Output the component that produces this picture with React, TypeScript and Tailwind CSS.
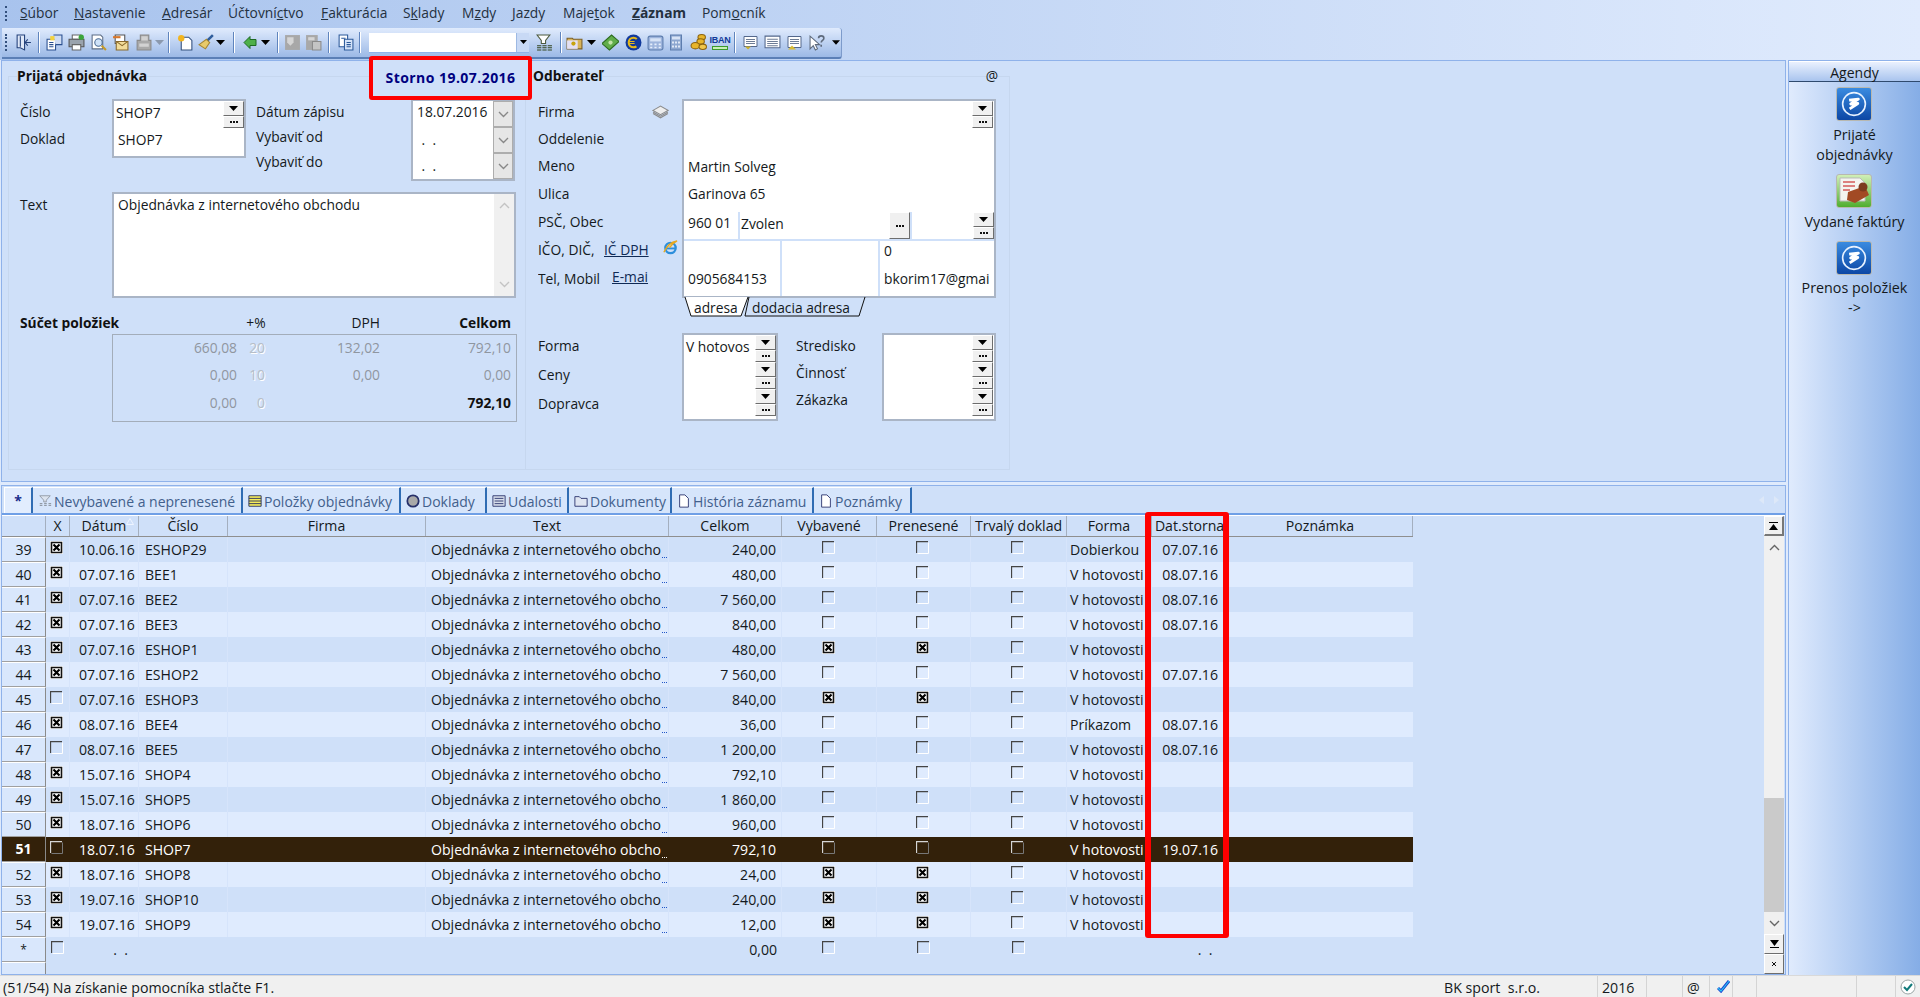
import React from "react";

const COLS = "grid grid-cols-[44px_24px_69px_89px_198px_243px_113px_95px_94px_96px_85px_76px_185px] w-[1411px]";

type R = [string, boolean, string, string, string, boolean, boolean, string, string];
const DATA: R[] = [
  ["39", true, "10.06.16", "ESHOP29", "240,00", false, false, "Dobierkou", "07.07.16"],
  ["40", true, "07.07.16", "BEE1", "480,00", false, false, "V hotovosti", "08.07.16"],
  ["41", true, "07.07.16", "BEE2", "7 560,00", false, false, "V hotovosti", "08.07.16"],
  ["42", true, "07.07.16", "BEE3", "840,00", false, false, "V hotovosti", "08.07.16"],
  ["43", true, "07.07.16", "ESHOP1", "480,00", true, true, "V hotovosti", ""],
  ["44", true, "07.07.16", "ESHOP2", "7 560,00", false, false, "V hotovosti", "07.07.16"],
  ["45", false, "07.07.16", "ESHOP3", "840,00", true, true, "V hotovosti", ""],
  ["46", true, "08.07.16", "BEE4", "36,00", false, false, "Príkazom", "08.07.16"],
  ["47", false, "08.07.16", "BEE5", "1 200,00", false, false, "V hotovosti", "08.07.16"],
  ["48", true, "15.07.16", "SHOP4", "792,10", false, false, "V hotovosti", ""],
  ["49", true, "15.07.16", "SHOP5", "1 860,00", false, false, "V hotovosti", ""],
  ["50", true, "18.07.16", "SHOP6", "960,00", false, false, "V hotovosti", ""],
  ["51", false, "18.07.16", "SHOP7", "792,10", false, false, "V hotovosti", "19.07.16"],
  ["52", true, "18.07.16", "SHOP8", "24,00", true, true, "V hotovosti", ""],
  ["53", true, "19.07.16", "SHOP10", "240,00", true, true, "V hotovosti", ""],
  ["54", true, "19.07.16", "SHOP9", "12,00", true, true, "V hotovosti", ""],
];

function Check({ on, dark }: { on: boolean; dark?: boolean }) {
  if (on)
    return (
      <svg width="13" height="13" viewBox="0 0 13 13" className="-mt-[4px] -ml-[2px]">
        <rect x="0" y="0" width="13" height="13" fill="#fff" />
        <path d="M1.500 11.500V1.500H11.500V11.500Z" fill="#fff" stroke="#111" strokeWidth="1.600" />
        <path d="M3.500 3.500 9.500 9.500M9.500 3.500 3.500 9.500" stroke="#000" strokeWidth="2.200" />
      </svg>
    );
  return (
    <svg width="13" height="13" viewBox="0 0 13 13" className="-mt-[4px] -ml-[2px]">
      <path d="M.5 12V.5H12" fill="none" stroke={dark ? "#d5d5d5" : "#444"} strokeWidth="1.300" />
      <path d="M1.500 12.500H12.500V1.500" fill="none" stroke={dark ? "#777" : "#fff"} />
    </svg>
  );
}

function Tri({ c = "#000" }: { c?: string }) {
  return (
    <svg width="9" height="5" viewBox="0 0 9 5">
      <path d="M0 0H9L4.5 5Z" fill={c} />
    </svg>
  );
}

const BTN = "bg-[#f0f0f0] border border-t-white border-l-white border-r-[#6d6d6d] border-b-[#6d6d6d] flex items-center justify-center";

function Dots() {
  return (
    <svg width="8" height="2" viewBox="0 0 8 2">
      <path d="M0 0h2v2H0zM3 0h2v2H3zM6 0h2v2H6z" fill="#111" />
    </svg>
  );
}

function Drop() {
  return (
    <div className="flex flex-col w-[21px] shrink-0">
      <div className={BTN + " h-[15px]"}>
        <Tri />
      </div>
      <div className={BTN + " h-[12px]"}>
        <Dots />
      </div>
    </div>
  );
}

function Chev({ up, c = "#888" }: { up?: boolean; c?: string }) {
  return (
    <svg width="11" height="7" viewBox="0 0 11 7">
      <path d={up ? "M1 6 5.5 1.5 10 6" : "M1 1 5.5 5.5 10 1"} fill="none" stroke={c} strokeWidth="1.4" />
    </svg>
  );
}

function Sep({ w }: { w: string }) {
  return (
    <div className={"flex justify-center shrink-0 " + w}>
      <div className="w-[1px] h-[21px] bg-[#5f84bd] border-r border-r-white box-content" />
    </div>
  );
}

function Cell({ w, children }: { w: string; children: React.ReactNode }) {
  return <div className={"flex items-center justify-center shrink-0 h-[22px] " + w}>{children}</div>;
}

function I({ children, s = 17 }: { children: React.ReactNode; s?: number }) {
  return (
    <svg width={s} height={s} viewBox="0 0 16 16" fill="none">
      {children}
    </svg>
  );
}

function Toolbar() {
  return (
    <div className="ml-[2px] w-[840px] h-[31px] flex items-center pl-[2px] rounded-r-[3px] border-b-2 border-b-[#5b7fb6] border-r border-r-[#7d9bcb] bg-linear-to-b from-[#e0ebfd] to-[#9cb9e6]">
      <div className="w-[7px] h-[17px] border-l-2 border-dotted border-l-[#33507d] ml-[1px]" />
      <Cell w="w-[23px]">
        <I>
          <path d="M2 1h7v14l-4-2H2z" fill="#dfe8f8" stroke="#23407a" />
          <path d="M5 2v10M12 5 9.5 8l2.5 3M15 8H10" stroke="#23407a" />
        </I>
      </Cell>
      <Sep w="w-[8px]" />
      <Cell w="w-[22px]">
        <I>
          <path d="M1 5h8v10H1z" fill="#fff" stroke="#2a4f8f" />
          <path d="M7 1h8v9H9" fill="#cfdcf3" stroke="#2a4f8f" />
          <path d="M3 8h4M3 10h4M3 12h4" stroke="#2a4f8f" />
          <path d="M4 2h4v4H4z" fill="#f4d23c" />
        </I>
      </Cell>
      <Cell w="w-[22px]">
        <I>
          <path d="M4 1h8v4H4z" fill="#fff" stroke="#666" />
          <path d="M1 5h14v7H1z" fill="#9aa3ad" stroke="#555" />
          <path d="M4 10h8v5H4z" fill="#fff" stroke="#666" />
          <circle cx="12.5" cy="3" r="2.5" fill="#3aa53a" />
        </I>
      </Cell>
      <Cell w="w-[22px]">
        <I>
          <path d="M2 1h8l2 2v11H2z" fill="#fff" stroke="#5d6d85" />
          <circle cx="8" cy="8" r="3.5" fill="#cfe2f8" stroke="#4a6a94" />
          <path d="M11 11l4 4" stroke="#c49a2c" strokeWidth="2" />
        </I>
      </Cell>
      <Cell w="w-[22px]">
        <I>
          <path d="M3 1h9v8H3z" fill="#fff" stroke="#555" />
          <path d="M1 2h7v2H1z" fill="#d8762a" />
          <path d="M4 7h11v8H4z" fill="#f2dc9a" stroke="#8a6a2c" />
          <path d="M4 7l5.5 4L15 7" stroke="#8a6a2c" />
        </I>
      </Cell>
      <Cell w="w-[24px]">
        <I>
          <path d="M2 6h3V1h8v5h2v9H2z" fill="#a9a9a9" stroke="#8a8a8a" />
          <path d="M6 2h6v4H6zM4 9h9v3H4z" fill="#d2d2d2" />
        </I>
      </Cell>
      <Cell w="w-[9px]">
        <Tri c="#8b99ae" />
      </Cell>
      <Sep w="w-[10px]" />
      <Cell w="w-[22px]">
        <I>
          <path d="M4 3h7l3 3v9H4z" fill="#fff" stroke="#33507d" />
          <circle cx="4" cy="4" r="3" fill="#f2b51f" />
        </I>
      </Cell>
      <Cell w="w-[20px]">
        <I>
          <path d="M14 1 8 7" stroke="#2f5d9c" strokeWidth="2.4" />
          <path d="M8 5 11 8 7 14 1 10z" fill="#e8ca6a" stroke="#a58634" />
        </I>
      </Cell>
      <Cell w="w-[9px]">
        <Tri />
      </Cell>
      <Sep w="w-[17px]" />
      <Cell w="w-[16px]">
        <I>
          <path d="M2 8 8 2v3h6v6H8v3z" fill="#4eb04a" stroke="#1c6a22" />
        </I>
      </Cell>
      <Cell w="w-[15px]">
        <Tri />
      </Cell>
      <Sep w="w-[10px]" />
      <Cell w="w-[19px]">
        <I>
          <path d="M1 1h14v14H1z" fill="#a8a8a8" />
          <path d="M3 3h6v5l-3 3-3-3z" fill="#d5d5d5" />
        </I>
      </Cell>
      <Cell w="w-[22px]">
        <I>
          <path d="M1 1h11v14H1z" fill="#a8a8a8" />
          <path d="M7 7h8v8H7z" fill="#c4c4c4" stroke="#8a8a8a" />
          <path d="M3 3h6v3H3z" fill="#d5d5d5" />
        </I>
      </Cell>
      <Sep w="w-[10px]" />
      <Cell w="w-[22px]">
        <I>
          <path d="M2 1h8v11H2z" fill="#fff" stroke="#2c5a9a" />
          <path d="M7 5h8v10H7z" fill="#d5e3f8" stroke="#2c5a9a" />
          <path d="M4 4h4M9 8h4M9 10h4M9 12h4" stroke="#2c5a9a" />
        </I>
      </Cell>
      <Sep w="w-[8px]" />
      <div className="ml-[5px] w-[160px] h-[20px] bg-white flex justify-end shrink-0 border-b border-b-[#8fb2ea]">
        <div className="w-[13px] bg-[#c8d9f5] border-l border-l-[#9db9e3] flex items-center justify-center">
          <svg width="7" height="4" viewBox="0 0 7 4">
            <path d="M0 0H7L3.5 4Z" fill="#000" />
          </svg>
        </div>
      </div>
      <Cell w="w-[30px]">
        <I>
          <path d="M1 1h12L9 6v3H5V6z" fill="#fff" stroke="#4d5a3f" />
          <path d="M1 11h4M6 11h4M11 11h4M1 13h4M6 13h4M11 13h4M1 15h4M6 15h4M11 15h4" stroke="#33451f" />
        </I>
      </Cell>
      <Sep w="w-[4px]" />
      <Cell w="w-[23px]">
        <I>
          <path d="M1 4h5l1 1h8v9H1z" fill="#d8b45a" stroke="#7c5f26" />
          <path d="M1 6h10v8H1z" fill="#e3e0f4" />
          <circle cx="7" cy="9" r="2" fill="#c7a30e" />
        </I>
      </Cell>
      <Cell w="w-[10px]">
        <Tri />
      </Cell>
      <Cell w="w-[28px]">
        <I>
          <path d="M0 9 9 1l7 6-9 8z" fill="#60ad4a" stroke="#2d6c20" />
          <circle cx="8" cy="8" r="2" fill="#c3e3a8" />
        </I>
      </Cell>
      <Cell w="w-[18px]">
        <I>
          <circle cx="8" cy="8" r="7.5" fill="#11399c" />
          <circle cx="8" cy="8" r="4.5" fill="none" stroke="#e5b81b" strokeWidth="2" strokeDasharray="20 8" strokeDashoffset="-4" />
          <path d="M3 7h6M3 9h6" stroke="#e5b81b" />
        </I>
      </Cell>
      <Cell w="w-[26px]">
        <I>
          <rect x="1" y="2" width="14" height="13" rx="2" fill="#9db4dc" stroke="#5d7dae" />
          <path d="M3 4h10v3H3z" fill="#d7e3f6" />
          <path d="M3 9h2v1.5H3zM7 9h2v1.5H7zM11 9h2v1.5h-2zM3 12h2v1.5H3zM7 12h2v1.5H7zM11 12h2v1.5h-2z" fill="#e6eefb" />
        </I>
      </Cell>
      <Cell w="w-[16px]">
        <I>
          <rect x="2.5" y="0.5" width="11" height="15" fill="#8ca6cf" stroke="#5d7dae" />
          <path d="M4 2h8v3H4z" fill="#d7e3f6" />
          <path d="M4 7h2v2H4zM7 7h2v2H7zM10 7h2v2h-2zM4 11h2v2H4zM7 11h2v2H7zM10 11h2v2h-2z" fill="#dfe8f6" />
        </I>
      </Cell>
      <Cell w="w-[28px]">
        <I>
          <ellipse cx="11" cy="3" rx="3.5" ry="2.5" fill="#e8b52a" stroke="#8c6410" />
          <ellipse cx="10" cy="7" rx="3.5" ry="2.5" fill="#e8b52a" stroke="#8c6410" />
          <ellipse cx="5" cy="11" rx="4" ry="3" fill="#e8b52a" stroke="#8c6410" />
          <ellipse cx="12" cy="12" rx="3.5" ry="2.5" fill="#f0c64a" stroke="#8c6410" />
        </I>
      </Cell>
      <Cell w="w-[16px]">
        <div className="flex flex-col items-center leading-none">
          <span className="text-[9px] font-bold text-[#123a9a] font-['Liberation_Sans',sans-serif] leading-[11px] tracking-[-0.3px]">IBAN</span>
          <span className="w-[16px] h-[4px] border border-[#3c9a2a] bg-[#c8efb8]" />
        </div>
      </Cell>
      <Sep w="w-[14px]" />
      <Cell w="w-[16px]">
        <I>
          <path d="M2 2h13v10H2z" fill="#fff" stroke="#54688c" />
          <path d="M4 5h9M4 7h9M4 9h9" stroke="#6d7c95" />
          <path d="M3 12h6l-3 3z" fill="#cbb02a" />
        </I>
      </Cell>
      <Cell w="w-[28px]">
        <I>
          <path d="M1 2h14v11H1z" fill="#fff" stroke="#54688c" />
          <path d="M3 5h10M3 7h10M3 9h10M3 11h10" stroke="#6d7c95" />
        </I>
      </Cell>
      <Cell w="w-[16px]">
        <I>
          <path d="M2 2h13v11H2z" fill="#fff" stroke="#54688c" />
          <path d="M4 5h9M4 7h9M4 9h9" stroke="#6d7c95" />
          <path d="M2 15h8l-4-4z" fill="#d9bc36" />
        </I>
      </Cell>
      <Cell w="w-[30px]">
        <I>
          <path d="M1 2v12l3-3 2 4 2-1-2-4h4z" fill="#fff" stroke="#5e6a7c" />
          <path d="M9 4c0-3 5-3 5 0 0 2-2.500 2-2.500 4M11.500 10v2" stroke="#5e6a7c" strokeWidth="1.5" />
        </I>
      </Cell>
      <Cell w="w-[8px]">
        <Tri />
      </Cell>
    </div>
  );
}

function M({ w, b, u, a, bold }: { w: string; b?: string; u: string; a: string; bold?: boolean }) {
  return (
    <div className={"shrink-0 whitespace-nowrap " + w + (bold ? " font-bold" : "")}>
      {b}
      <u>{u}</u>
      {a}
    </div>
  );
}

function Menu() {
  return (
    <div className="h-[28px] flex items-center pl-[5px] pb-[2px] text-[#24313f]">
      <div className="w-[15px] h-[15px] border-l-2 border-dotted border-l-[#33507d]" />
      <M w="w-[54px]" u="S" a="úbor" />
      <M w="w-[88px]" u="N" a="astavenie" />
      <M w="w-[66px]" u="A" a="dresár" />
      <M w="w-[93px]" b="Účtovní" u="c" a="tvo" />
      <M w="w-[82px]" u="F" a="akturácia" />
      <M w="w-[59px]" b="S" u="k" a="lady" />
      <M w="w-[50px]" b="M" u="z" a="dy" />
      <M w="w-[51px]" u="J" a="azdy" />
      <M w="w-[69px]" b="Maje" u="t" a="ok" />
      <M w="w-[70px]" u="Z" a="áznam" bold />
      <M w="w-[80px]" b="Pom" u="o" a="cník" />
    </div>
  );
}

function LeftGroup() {
  return (
    <div className="w-[518px] h-[394px] border border-[#c6d7ef] shrink-0">
      <div className="-mt-[11px] h-[20px] pl-[8px] font-bold leading-[20px] text-[#111]"><span className="bg-[#cfe0f9]">Prijatá objednávka</span></div>
      <div className="mt-[13px] flex h-[82px]">
        <div className="w-[103px] pl-[11px] shrink-0">
          <div className="h-[26px] leading-[26px]">Číslo</div>
          <div className="h-[28px] leading-[28px]">Doklad</div>
        </div>
        <div className="w-[134px] h-[59px] bg-white border-2 border-[#aab5c6] flex shrink-0">
          <div className="flex-1">
            <div className="h-[25px] leading-[23px] pl-[2px]">SHOP7</div>
            <div className="h-[28px] leading-[28px] pl-[4px]">SHOP7</div>
          </div>
          <Drop />
        </div>
        <div className="ml-[10px] w-[155px] shrink-0">
          <div className="h-[25px] leading-[25px]">Dátum zápisu</div>
          <div className="h-[25px] leading-[25px]">Vybaviť od</div>
          <div className="h-[25px] leading-[25px]">Vybaviť do</div>
        </div>
        <div className="w-[104px] h-[82px] bg-white border-2 border-[#aab5c6] shrink-0 flex flex-col">
          {["18.07.2016", " .  .", " .  ."].map((t, i) => (
            <div key={i} className="flex h-[26px] flex-1">
              <div className={"flex-1 whitespace-pre " + (i ? "pl-[5px] leading-[26px]" : "pl-[4px] leading-[22px]")}>{t}</div>
              <div className="w-[20px] bg-[#e6e6e6] border border-[#adadad] flex items-center justify-center">
                <Chev />
              </div>
            </div>
          ))}
        </div>
      </div>
      <div className="mt-[11px] flex h-[106px]">
        <div className="w-[103px] pl-[11px] h-[26px] leading-[26px] shrink-0">Text</div>
        <div className="w-[404px] bg-white border-2 border-[#aab5c6] flex">
          <div className="flex-1 pl-[4px] leading-[22px]">Objednávka z internetového obchodu</div>
          <div className="w-[20px] bg-[#f0f0f0] flex flex-col items-center justify-between py-[8px]">
            <Chev up c="#c4c4c4" />
            <Chev c="#c4c4c4" />
          </div>
        </div>
      </div>
      <div className="mt-[14px] h-[22px] grid grid-cols-[103px_125px_32px_111px_131px] items-center">
        <div className="pl-[11px] font-bold whitespace-nowrap text-[#111]">Súčet položiek</div>
        <div />
        <div className="text-center pl-[6px]">+%</div>
        <div className="text-right">DPH</div>
        <div className="text-right font-bold text-[#111]">Celkom</div>
      </div>
      <div className="ml-[103px] w-[405px] h-[88px] border border-[#a3adba]">
        {[
          ["660,08", "20", "132,02", "792,10", "h-[26px]"],
          ["0,00", "10", "0,00", "0,00", "h-[28px]"],
          ["0,00", "0", "", "792,10", "h-[28px]"],
        ].map((r, i) => (
          <div key={i} className={"grid grid-cols-[124px_32px_111px_131px] items-center text-[#8f96a0] " + r[4]}>
            <div className="text-right">{r[0]}</div>
            <div className="text-right pr-[4px] text-[#b6bdc7] [text-shadow:1px_1px_0_#fff]">{r[1]}</div>
            <div className="text-right">{r[2]}</div>
            <div className={i === 2 ? "text-right font-bold text-[#111]" : "text-right"}>{r[3]}</div>
          </div>
        ))}
      </div>
    </div>
  );
}

function Tab({ w, points, text, pad, fill }: { w: string; points: string; text: string; pad: string; fill: string }) {
  return (
    <div className={"relative h-[20px] shrink-0 " + w}>
      <svg className="absolute inset-0 overflow-visible" width="100%" height="20">
        <polyline points={points} fill={fill} stroke="#111" />
      </svg>
      <span className={"relative block leading-[21px] whitespace-nowrap " + pad}>{text}</span>
    </div>
  );
}

function RightGroup() {
  const lbl = "flex items-center whitespace-nowrap";
  return (
    <div className="w-[484px] h-[394px] border border-[#c6d7ef] border-l-0 shrink-0">
      <div className="-mt-[11px] h-[20px] pl-[7px] pr-[11px] flex justify-between leading-[20px]">
        <span className="font-bold bg-[#cfe0f9] text-[#111]">Odberateľ</span>
        <span>@</span>
      </div>
      <div className="mt-[13px] flex">
        <div className="w-[156px] pl-[12px] shrink-0">
          <div className={lbl + " h-[26px]"}>
            <span className="w-[114px]">Firma</span>
            <svg width="17" height="15" viewBox="0 0 16 14">
              <path d="M1 5 8 1l7 4-7 4z" fill="#eee" stroke="#8c8c8c" />
              <path d="M1 8l7 4 7-4M1 6.500l7 4 7-4" fill="none" stroke="#8c8c8c" />
            </svg>
          </div>
          <div className={lbl + " h-[28px]"}>
            <span className="w-[66px] overflow-hidden">Oddelenie</span>
          </div>
          <div className={lbl + " h-[27px]"}>Meno</div>
          <div className={lbl + " h-[28px]"}>Ulica</div>
          <div className={lbl + " h-[27px] pt-[1px]"}>PSČ, Obec</div>
          <div className={lbl + " h-[30px] pt-[1px]"}>
            <span className="w-[66px]">IČO, DIČ,</span>
            <u className="w-[59px] text-[#0f2a55]">IČ DPH</u>
            <svg width="15" height="15" viewBox="0 0 16 16" className="-mt-[6px]">
              <circle cx="8" cy="8.500" r="5.500" fill="none" stroke="#2d8fdc" strokeWidth="2.500" />
              <path d="M3 9h10" stroke="#2d8fdc" strokeWidth="2" />
              <path d="M1 13c3-7 8-11 14-12-2 1-6 4-8 7" fill="none" stroke="#e6a81f" strokeWidth="1.500" />
            </svg>
          </div>
          <div className={lbl + " h-[28px]"}>
            <span className="w-[68px] overflow-hidden">Tel, Mobil</span>
            <u className="ml-[6px] -mt-[4px] text-[#0f2a55]">E-mai</u>
          </div>
        </div>
        <div className="w-[314px] shrink-0">
          <div className="h-[199px] bg-white border-2 border-[#aab5c6] flex flex-col">
            <div className="h-[27px] flex justify-end pr-[1px]">
              <Drop />
            </div>
            <div className="h-[25px]" />
            <div className="h-[27px] leading-[27px] pl-[4px]">Martin Solveg</div>
            <div className="h-[28px] leading-[28px] pl-[4px]">Garinova 65</div>
            <div className="h-[4px]" />
            <div className="h-[27px] flex items-stretch">
              <div className="w-[50px] pl-[4px] leading-[22px] border-r-2 border-[#cfe0f9] box-content shrink-0 whitespace-nowrap">960 01</div>
              <div className="w-[149px] leading-[24px] pl-[1px] shrink-0">Zvolen</div>
              <div className={BTN + " w-[21px] shrink-0"}>
                <Dots />
              </div>
              <div className="w-[63px] border-l-2 border-[#cfe0f9] shrink-0" />
              <Drop />
            </div>
            <div className="h-[2px] bg-[#cfe0f9]" />
            <div className="flex-1 flex">
              <div className="w-[92px] border-r-2 border-[#cfe0f9] box-content pl-[4px] flex flex-col justify-end">
                <div className="h-[31px] leading-[28px]">0905684153</div>
              </div>
              <div className="w-[96px] border-r-2 border-[#cfe0f9] box-content" />
              <div className="flex-1 pl-[4px] overflow-hidden whitespace-nowrap">
                <div className="h-[24px] leading-[20px]">0</div>
                <div className="h-[31px] leading-[28px]">bkorim17@gmai</div>
              </div>
            </div>
          </div>
          <div className="flex pl-[2px] -mt-[1px]">
            <Tab w="w-[60px]" points="1,0 7,19 57,19 64,0" fill="#fff" text="adresa" pad="pl-[10px]" />
            <Tab w="w-[120px]" points="5,0 1,19 115,19 121,0" fill="none" text="dodacia adresa" pad="pl-[8px]" />
          </div>
        </div>
      </div>
      <div className="mt-[16px] flex">
        <div className="w-[156px] pl-[12px] shrink-0">
          <div className={lbl + " h-[27px]"}>Forma</div>
          <div className={lbl + " h-[30px]"}>Ceny</div>
          <div className={lbl + " h-[28px]"}>Dopravca</div>
        </div>
        <div className="w-[96px] h-[88px] bg-white border-2 border-[#aab5c6] flex shrink-0">
          <div className="flex-1 pl-[2px] leading-[24px] overflow-hidden whitespace-nowrap">V hotovos</div>
          <div className="pr-[0px]">
            <Drop />
            <Drop />
            <Drop />
          </div>
        </div>
        <div className="ml-[18px] w-[86px] shrink-0">
          <div className={lbl + " h-[27px]"}>Stredisko</div>
          <div className={lbl + " h-[27px]"}>Činnosť</div>
          <div className={lbl + " h-[27px]"}>Zákazka</div>
        </div>
        <div className="w-[114px] h-[88px] bg-white border-2 border-[#aab5c6] flex justify-end pr-[1px] shrink-0">
          <div>
            <Drop />
            <Drop />
            <Drop />
          </div>
        </div>
      </div>
    </div>
  );
}

function TabIcon({ k }: { k: string }) {
  if (k === "filter")
    return (
      <I s={14}>
        <path d="M2 2h12L9.500 7v2h-3V7z" fill="#dce3ee" stroke="#8f96a0" />
        <path d="M2 11h3M7 11h3M12 11h3M2 13h3M7 13h3M12 13h3" stroke="#7d838c" />
      </I>
    );
  if (k === "lines")
    return (
      <I s={14}>
        <path d="M1 2h14v12H1z" fill="#f6ee5b" stroke="#21295f" />
        <path d="M1 5h14M1 8h14M1 11h14" stroke="#21295f" />
      </I>
    );
  if (k === "coin")
    return (
      <I s={14}>
        <circle cx="8" cy="8" r="6.500" fill="#a9a9a9" stroke="#27306a" strokeWidth="2" />
      </I>
    );
  if (k === "list")
    return (
      <I s={14}>
        <path d="M1 2h14v12H1z" fill="#d5dcea" stroke="#27306a" />
        <path d="M3 5h10M3 8h10M3 11h10" stroke="#27306a" />
      </I>
    );
  if (k === "folder")
    return (
      <I s={14}>
        <path d="M1 14V3h5l2 2h7v9z" fill="#dfe5f2" stroke="#27306a" />
      </I>
    );
  return (
    <I s={14}>
      <path d="M3 1h6l4 4v10H3z" fill="#fff" stroke="#27306a" />
    </I>
  );
}

function BTab({ w, k, t }: { w: string; k: string; t: string }) {
  return (
    <div className={"shrink-0 flex items-center gap-[2px] pl-[5px] pt-[1px] bg-[#d6e5fb] border-t border-t-white border-r-2 border-r-[#2f6cb3] overflow-hidden whitespace-nowrap text-[#42608c] " + w}>
      <TabIcon k={k} />
      <span>{t}</span>
    </div>
  );
}

function Row({ r, i }: { r: R; i: number }) {
  const sel = r[0] === "51";
  const bg = sel ? "bg-[#33210a] text-white" : i % 2 ? "bg-[#dfebfe]" : "bg-[#cfe0f9]";
  const sep = "border-r " + (sel ? "border-r-[#33210a]" : "border-r-[#d6e4fb]");
  return (
    <div className={COLS + " h-[25px] " + bg}>
      <div className={sel ? "flex items-center justify-center font-bold bg-[#33210a] border-b border-b-[#a0a0a0] border-r border-r-[#8a8a8a]" : "flex items-center justify-center bg-[#d9e7fc] border-b border-b-[#a0a0a0] border-t border-t-white border-r border-r-[#8a8a8a]"}>{r[0]}</div>
      <div className={"flex items-center justify-center " + sep}>
        <Check on={r[1]} dark={sel} />
      </div>
      <div className={"flex items-center pl-[9px] " + sep}>{r[2]}</div>
      <div className={"flex items-center pl-[6px] " + sep}>{r[3]}</div>
      <div className={sep} />
      <div className={"flex items-center pl-[5px] overflow-hidden whitespace-nowrap " + sep}>
        <span>Objednávka z internetového obcho</span>
        <span className={"self-end mb-[4px] ml-[1px] w-[5px] border-b border-dotted " + (sel ? "border-b-white" : "border-b-[#1f55c8]")} />
      </div>
      <div className={"flex items-center justify-end pr-[5px] " + sep}>{r[4]}</div>
      <div className={"flex items-center justify-center " + sep}>
        <Check on={r[5]} dark={sel} />
      </div>
      <div className={"flex items-center justify-center " + sep}>
        <Check on={r[6]} dark={sel} />
      </div>
      <div className={"flex items-center justify-center " + sep}>
        <Check on={false} dark={sel} />
      </div>
      <div className={"flex items-center pl-[3px] overflow-hidden whitespace-nowrap " + sep}>{r[7]}</div>
      <div className={"flex items-center justify-end pr-[9px] " + sep}>{r[8]}</div>
      <div />
    </div>
  );
}

function Grid() {
  const heads = ["", "X", "Dátum", "Číslo", "Firma", "Text", "Celkom", "Vybavené", "Prenesené", "Trvalý doklad", "Forma", "Dat.storna", "Poznámka"];
  return (
    <div className="flex text-[14.1px]">
      <div className="flex-1">
        <div className={COLS + " h-[20px] border-b-2 border-b-[#8f8f8f] box-content -mb-[1px]"}>
          {heads.map((h, i) => (
            <div key={i} className="relative flex items-center justify-center whitespace-nowrap overflow-hidden border-r border-r-[#a4afbf]">
              {h}
              {h === "Dátum" && (
                <svg width="8" height="7" viewBox="0 0 8 7" className="absolute right-[4px] top-[2px]">
                  <path d="M4 .5 7.500 6.500H.5Z" fill="none" stroke="#eef4ff" />
                </svg>
              )}
            </div>
          ))}
        </div>
        {DATA.map((r, i) => (
          <Row key={r[0]} r={r} i={i} />
        ))}
        <div className={COLS + " h-[25px]"}>
          <div className="flex items-center justify-center bg-[#d9e7fc] border-b border-b-[#a0a0a0] border-t border-t-white border-r border-r-[#8a8a8a] text-[12px]">*</div>
          <div className="flex items-center justify-center">
            <Check on={false} />
          </div>
          <div className="flex items-center justify-center whitespace-pre pl-[32px]">.  .</div>
          <div />
          <div />
          <div />
          <div className="flex items-center justify-end pr-[5px]">0,00</div>
          <div className="flex items-center justify-center">
            <Check on={false} />
          </div>
          <div className="flex items-center justify-center">
            <Check on={false} />
          </div>
          <div className="flex items-center justify-center">
            <Check on={false} />
          </div>
          <div />
          <div className="flex items-center justify-center whitespace-pre pl-[30px]">.  .</div>
          <div />
        </div>
        <div className="w-[44px] h-[13px] bg-[#d9e7fc] border-t border-t-white border-r border-r-[#8a8a8a]" />
      </div>
      <div className="w-[20px] mr-[1px] shrink-0 flex flex-col h-[458px]">
        <div className={BTN + " h-[20px] shrink-0 border-r-2 border-b-2 border-r-[#777] border-b-[#777]"}>
          <svg width="9" height="8" viewBox="0 0 9 8">
            <path d="M0 0H9V1H0zM0 8 4.500 2 9 8Z" fill="#000" />
          </svg>
        </div>
        <div className="flex-1 bg-[#f0f0f0] flex flex-col">
          <div className="h-[22px] flex items-center justify-center">
            <Chev up c="#666" />
          </div>
          <div className="flex-1" />
          <div className="h-[114px] bg-[#cacaca]" />
          <div className="h-[22px] flex items-center justify-center">
            <Chev c="#666" />
          </div>
        </div>
        <div className={BTN + " h-[20px] shrink-0"}>
          <svg width="9" height="8" viewBox="0 0 9 8">
            <path d="M0 0 9 0 4.500 6ZM0 7H9V8H0z" fill="#000" />
          </svg>
        </div>
        <div className={BTN + " h-[20px] shrink-0"}>
          <svg width="6" height="6" viewBox="0 0 6 6">
            <path d="M1 1 5 5M5 1 1 5" stroke="#111" />
          </svg>
        </div>
      </div>
    </div>
  );
}

function AgendaIcon() {
  return (
    <div className="w-[36px] h-[34px] rounded-[3px] border border-[#b8b8b0] bg-linear-to-b from-[#3a8be0] to-[#0d47a5] flex items-center justify-center">
      <svg width="26" height="26" viewBox="0 0 24 24">
        <circle cx="12" cy="12" r="10.500" fill="none" stroke="#e8f2ff" strokeWidth="1.500" />
        <path d="M7.500 8.500 16 7.500 9 12 15.500 11.500 8 16.500" fill="none" stroke="#fff" strokeWidth="2.600" strokeLinejoin="round" />
      </svg>
    </div>
  );
}

function InvoiceIcon() {
  return (
    <div className="w-[36px] h-[34px] rounded-[3px] border border-[#b8b8b0] bg-linear-to-b from-[#d0efb6] to-[#4fae2c] flex items-center justify-center overflow-hidden">
      <svg width="34" height="32" viewBox="0 0 34 32">
        <path d="M3 3h20l5 5v18H3z" fill="#f4f4f0" stroke="#bbb" />
        <path d="M6 7h12M6 11h12M6 15h7" stroke="#d35a5a" strokeWidth="1.500" />
        <path d="M11 17 28 11l4 9-14 8-8-3z" fill="#a24a24" />
        <circle cx="26" cy="12" r="4.500" fill="#7c3a1e" />
      </svg>
    </div>
  );
}

export default function App() {
  return (
    <div className="relative w-[1920px] h-[997px] overflow-hidden flex flex-col font-['Open_Sans',sans-serif] text-[13.8px] text-[#141920] bg-[#dfeafc]">
      <div className="h-[60px] shrink-0 bg-linear-to-r from-[#a8c3ed] to-[#e0ebfd]">
        <Menu />
        <Toolbar />
      </div>
      <div className="h-[915px] flex">
        <div className="ml-[1px] w-[1785px] shrink-0 flex flex-col">
          <div className="h-[422px] border border-[#8fb2ea] bg-[#cfe0f9] pt-[15px] pl-[6px] flex shrink-0">
            <LeftGroup />
            <RightGroup />
          </div>
          <div className="mt-[3px] flex-1 border border-[#8fb2ea] bg-[#cfe0f9] overflow-hidden">
            <div className="h-[27px] flex items-stretch pl-[2px] pt-[1px] relative text-[14px]">
              <div className="w-[29px] shrink-0 flex items-center justify-center bg-[#e2edfe] border-t border-l border-t-white border-l-white border-r-2 border-r-[#2f6cb3] text-[#1a2d8c] font-bold">*</div>
              <BTab w="w-[210px]" k="filter" t="Nevybavené a neprenesené" />
              <BTab w="w-[158px]" k="lines" t="Položky objednávky" />
              <BTab w="w-[86px]" k="coin" t="Doklady" />
              <BTab w="w-[82px]" k="list" t="Udalosti" />
              <BTab w="w-[103px]" k="folder" t="Dokumenty" />
              <BTab w="w-[142px]" k="doc" t="História záznamu" />
              <BTab w="w-[98px]" k="doc" t="Poznámky" />
              <div className="flex-1 flex items-center justify-end gap-[10px] pr-[6px]">
                <svg width="5" height="8" viewBox="0 0 5 8">
                  <path d="M5 0V8L0 4Z" fill="#dde8f8" />
                </svg>
                <svg width="5" height="8" viewBox="0 0 5 8">
                  <path d="M0 0V8L5 4Z" fill="#dde8f8" />
                </svg>
              </div>
            </div>
            <div className="h-[3px] border-t-2 border-t-[#6f9fe6] bg-white" />
            <Grid />
          </div>
        </div>
        <div className="ml-[2px] w-[132px] shrink-0 border-l border-l-[#8fb2ea] border-t border-t-[#8fb2ea] bg-linear-to-r from-[#e0ebfd] to-[#85ade6] flex flex-col items-center text-center text-[14.3px]">
          <div className="w-full h-[21px] leading-[22px] border-b border-b-[#2f4a6e] border-t border-t-white bg-linear-to-b from-[#eaf1fe] to-[#a9c4ee] text-[14px]">Agendy</div>
          <div className="mt-[5px] -ml-[1px]">
            <AgendaIcon />
          </div>
          <div className="mt-[4px] leading-[20px]">
            Prijaté
            <br />
            objednávky
          </div>
          <div className="mt-[9px] -ml-[1px]">
            <InvoiceIcon />
          </div>
          <div className="mt-[4px] leading-[20px]">Vydané faktúry</div>
          <div className="mt-[9px] -ml-[2px]">
            <AgendaIcon />
          </div>
          <div className="mt-[3px] leading-[20px]">
            Prenos položiek
            <br />
            -&gt;
          </div>
        </div>
      </div>
      <div className="h-[22px] shrink-0 bg-[#f0f0f0] border-t border-t-[#d9d9d9] flex items-center whitespace-nowrap text-[14.2px]">
        <div className="flex-1 pl-[3px] pt-[2px]">(51/54) Na získanie pomocníka stlačte F1.</div>
        <div className="w-[153px] pt-[2px]">BK sport&nbsp;&nbsp;s.r.o.</div>
        <div className="w-[49px] h-full border-l border-l-[#d4d4d4] pl-[4px] leading-[23px]">2016</div>
        <div className="w-[36px] h-full border-l border-l-[#d4d4d4]" />
        <div className="w-[27px] h-full border-l border-l-[#d4d4d4] pl-[4px] leading-[23px]">@</div>
        <div className="w-[23px] h-full border-l border-l-[#d4d4d4] pl-[7px] flex items-center">
          <svg width="13" height="13" viewBox="0 0 13 13">
            <path d="M1 8 4 11 12 1" fill="none" stroke="#1d3fd0" strokeWidth="3" />
            <path d="M1 8 4 11 12 1" fill="none" stroke="#26c5f0" strokeWidth="1.200" />
          </svg>
        </div>
        <div className="w-[24px] h-full border-l border-l-[#d4d4d4]" />
        <div className="w-[100px] h-full border-l border-l-[#d4d4d4]" />
        <div className="w-[39px] h-full border-l border-l-[#d4d4d4]" />
        <div className="w-[25px] h-full border-l border-l-[#d4d4d4] flex items-center justify-center">
          <svg width="16" height="16" viewBox="0 0 16 16">
            <circle cx="8" cy="8" r="7" fill="#fff" stroke="#9aa5a5" />
            <path d="M4 8 7 11 12 5" fill="none" stroke="#117a7a" strokeWidth="2" />
          </svg>
        </div>
      </div>

      <div className="absolute left-[369px] top-[56px] w-[163px] h-[44px] border-[4px] border-[#f00] rounded-[3px] bg-[#cfe0f9] flex items-center justify-center pb-[2px] font-bold text-[14px] text-[#000080] tracking-[0.45px]">
        Storno 19.07.2016
      </div>
      <div className="absolute left-[1145px] top-[512px] w-[84px] h-[426px] border-x-[6px] border-y-[4px] border-[#f00] rounded-[3px]" />
    </div>
  );
}
